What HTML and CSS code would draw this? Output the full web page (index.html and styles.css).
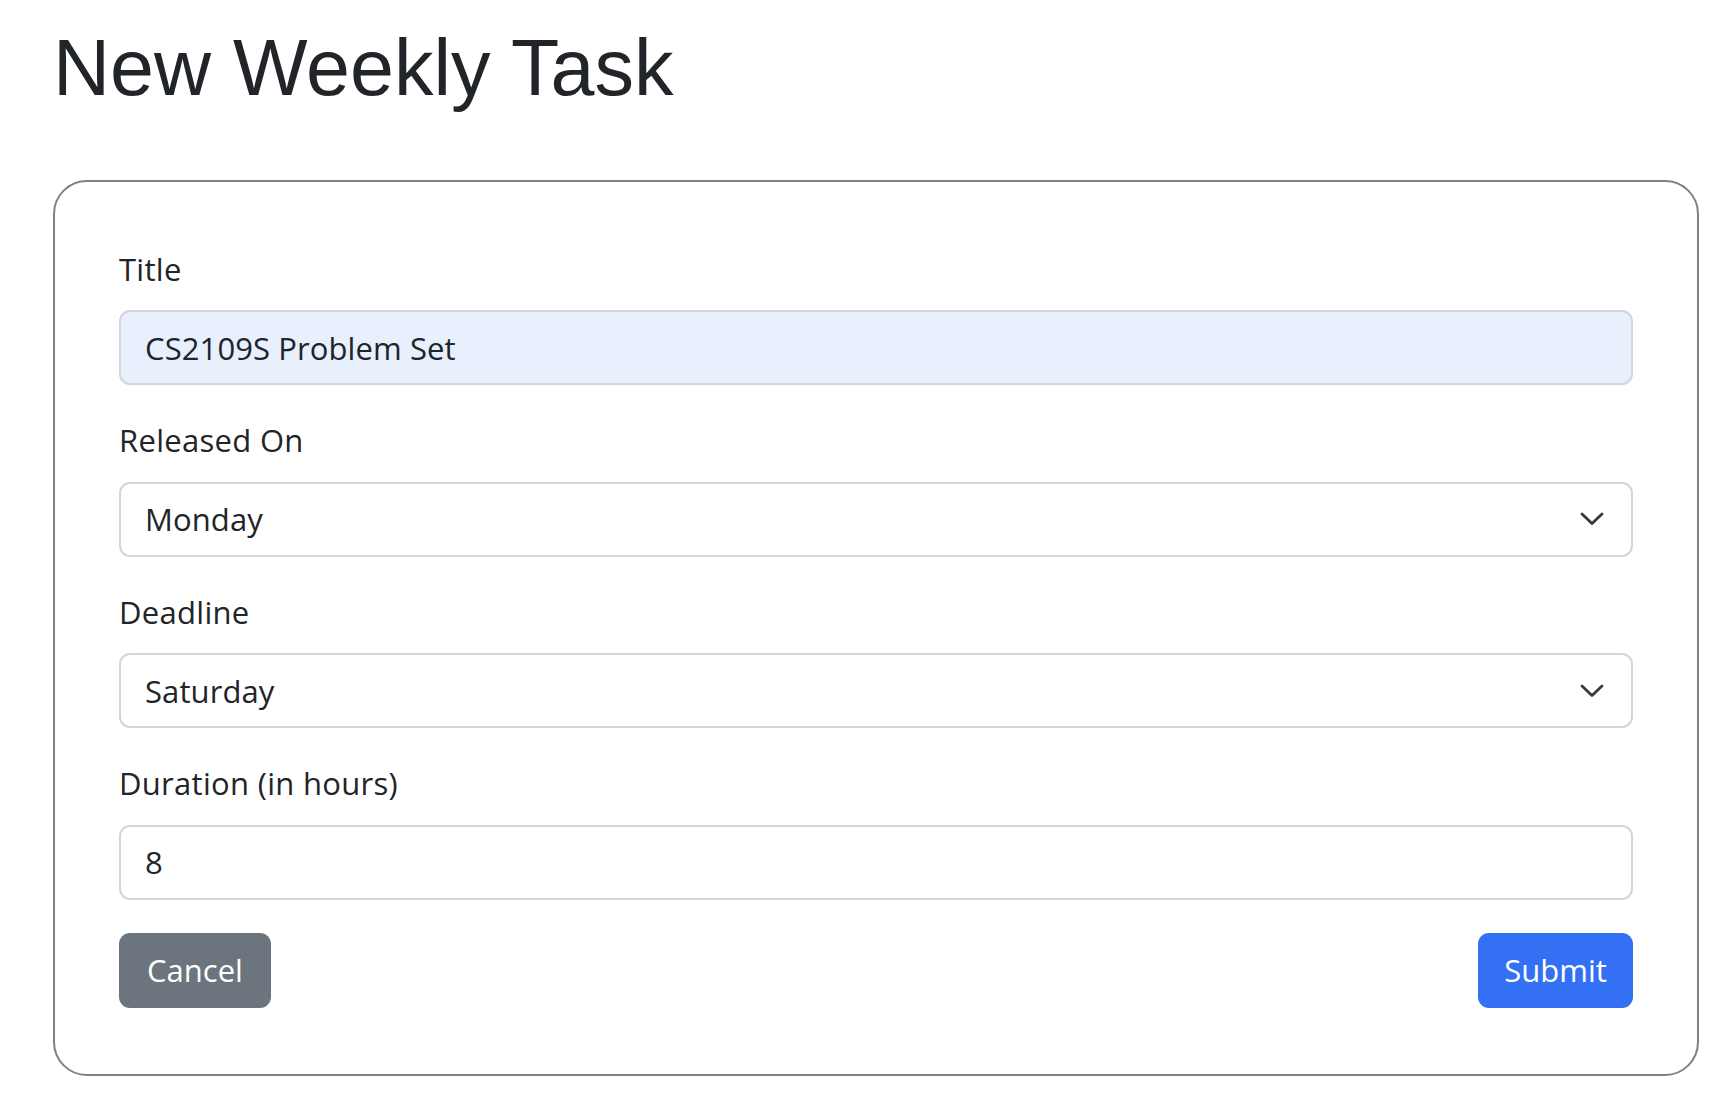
FILE: index.html
```html
<!DOCTYPE html>
<html lang="en">
<head>
<meta charset="utf-8">
<title>New Weekly Task</title>
<link rel="stylesheet" href="styles.css">
</head>
<body>
<main class="page">
  <h1 class="page-title">New Weekly Task</h1>
  <form class="card">
    <div class="field">
      <label class="field-label" for="title">Title</label>
      <input class="control control-filled" id="title" type="text" value="CS2109S Problem Set">
    </div>
    <div class="field">
      <label class="field-label" for="released">Released On</label>
      <div class="select-wrap">
        <select class="control control-select" id="released">
          <option selected>Monday</option>
          <option>Tuesday</option>
          <option>Wednesday</option>
          <option>Thursday</option>
          <option>Friday</option>
          <option>Saturday</option>
          <option>Sunday</option>
        </select>
        <svg class="chevron" width="24" height="14" viewBox="0 0 24 14" aria-hidden="true"><path d="M2 2 L12 11.5 L22 2" fill="none" stroke="#343a40" stroke-width="2.8" stroke-linecap="round" stroke-linejoin="round"/></svg>
      </div>
    </div>
    <div class="field">
      <label class="field-label" for="deadline">Deadline</label>
      <div class="select-wrap">
        <select class="control control-select" id="deadline">
          <option>Monday</option>
          <option>Tuesday</option>
          <option>Wednesday</option>
          <option>Thursday</option>
          <option>Friday</option>
          <option selected>Saturday</option>
          <option>Sunday</option>
        </select>
        <svg class="chevron" width="24" height="14" viewBox="0 0 24 14" aria-hidden="true"><path d="M2 2 L12 11.5 L22 2" fill="none" stroke="#343a40" stroke-width="2.8" stroke-linecap="round" stroke-linejoin="round"/></svg>
      </div>
    </div>
    <div class="field">
      <label class="field-label" for="duration">Duration (in hours)</label>
      <input class="control" id="duration" type="text" value="8">
    </div>
    <div class="actions">
      <button class="btn btn-secondary" type="button">Cancel</button>
      <button class="btn btn-primary" type="submit">Submit</button>
    </div>
  </form>
</main>
</body>
</html>
```
FILE: styles.css
```css
* { box-sizing: border-box; }

html, body {
  margin: 0;
  padding: 0;
  background: #ffffff;
}

body {
  font-family: "Open Sans", "Noto Sans", sans-serif;
  color: #212529;
}

.page {
  padding: 21px 29px 20px 53px;
}

.page-title {
  margin: 0 0 64px 0;
  font-family: "Liberation Sans", Arial, sans-serif;
  font-weight: 400;
  font-size: 79px;
  line-height: 1.2;
  color: #212529;
}

.card {
  border: 2px solid #808080;
  border-radius: 34px;
  padding: 64px 64px 66px 64px;
}

.field {
  display: flex;
  flex-direction: column;
  margin-bottom: 32px;
}

.field-label {
  font-size: 31px;
  line-height: 1.5;
  letter-spacing: 0.3px;
  margin-bottom: 18px;
  color: #212529;
}

.control {
  display: block;
  width: 100%;
  height: 75px;
  padding: 0 24px;
  font-family: "Open Sans", "Noto Sans", sans-serif;
  font-size: 31px;
  letter-spacing: 0.1px;
  color: #212529;
  background: #ffffff;
  border: 2px solid #d2d6db;
  border-radius: 11px;
  outline: none;
}

.control-filled {
  background: #e8f0fe;
}

.select-wrap {
  position: relative;
}

.control-select {
  appearance: none;
  -webkit-appearance: none;
  padding-right: 70px;
}

.chevron {
  position: absolute;
  right: 29px;
  top: 50%;
  margin-top: -7px;
  pointer-events: none;
}

.actions {
  display: flex;
  justify-content: space-between;
  align-items: center;
  padding-top: 1px;
}

.btn {
  height: 75px;
  padding: 0 26px;
  font-family: "Open Sans", "Noto Sans", sans-serif;
  font-size: 31px;
  color: #ffffff;
  border: none;
  border-radius: 11px;
  cursor: pointer;
}

.btn-secondary {
  background: #6c757d;
  width: 152px;
}

.btn-primary {
  background: #3370f4;
  width: 155px;
}
```
